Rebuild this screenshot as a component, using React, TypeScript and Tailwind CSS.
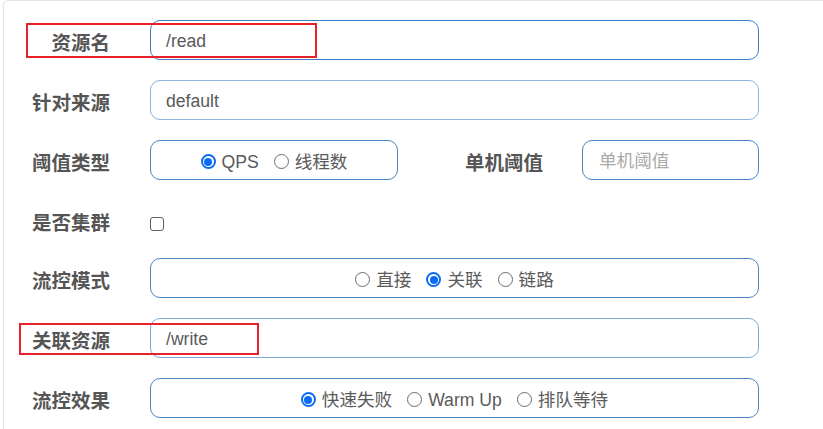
import React from 'react';

const font = "font-['Liberation_Sans','Noto_Sans_CJK_SC',sans-serif]";

const Label: React.FC<{ text: string; className?: string }> = ({ text, className = '' }) => (
  <div className={`h-10 flex items-center justify-end pt-[7px] text-[19.5px] font-bold text-[#555] ${className}`}>
    {text}
  </div>
);

const Radio: React.FC<{ checked?: boolean; label: string }> = ({ checked = false, label }) => (
  <label className="flex items-center gap-[6px]">
    {checked ? (
      <span className="w-[15px] h-[15px] rounded-full border-2 border-[#0a6cf5] flex items-center justify-center">
        <span className="w-[8px] h-[8px] rounded-full bg-[#0a6cf5]" />
      </span>
    ) : (
      <span className="w-[15px] h-[15px] rounded-full border border-[#6d6d6d] bg-white" />
    )}
    <span className="text-[17.6px] text-[#5a5a5a]">{label}</span>
  </label>
);

const RadioGroup: React.FC<{ options: string[]; selected: number; className?: string }> = ({
  options,
  selected,
  className = '',
}) => (
  <div
    className={`h-10 rounded-[10px] border border-[#4a84c4] flex items-center justify-center gap-[15px] pt-[4px] ${className}`}
  >
    {options.map((o, i) => (
      <Radio key={o} label={o} checked={i === selected} />
    ))}
  </div>
);

const TextInput: React.FC<{ value?: string; placeholder?: string; border?: string; className?: string }> = ({
  value,
  placeholder,
  border = 'border-[#4a84c4]',
  className = '',
}) => (
  <div
    className={`h-10 rounded-[10px] border ${border} flex items-center px-[15px] pt-[2px] text-[17.6px] ${className}`}
  >
    {value ? (
      <span className="text-[#5a5a5a]">{value}</span>
    ) : (
      <span className="text-[#aaa] pl-[1px]">{placeholder}</span>
    )}
  </div>
);

export default function App() {
  return (
    <div className={`relative w-[823px] h-[429px] overflow-hidden bg-white ${font}`}>
      <div className="ml-[3px] w-[900px] h-[520px] border border-[#e4e4e4] rounded-[5px] pt-[19px]">
        <div className="flex flex-col gap-5">
          <div className="flex">
            <Label text="资源名" className="w-[106px]" />
            <TextInput value="/read" border="border-[#3d7ec3]" className="ml-10 w-[609px]" />
          </div>

          <div className="flex">
            <Label text="针对来源" className="w-[106px]" />
            <TextInput value="default" border="border-[#8db3d9]" className="ml-10 w-[609px]" />
          </div>

          <div className="flex">
            <Label text="阈值类型" className="w-[106px]" />
            <RadioGroup options={['QPS', '线程数']} selected={0} className="ml-10 w-[248px]" />
            <Label text="单机阈值" className="w-[145px]" />
            <TextInput placeholder="单机阈值" className="ml-[39px] w-[177px]" />
          </div>

          <div className="flex items-center h-[38px] pt-[10px]">
            <div className="w-[106px] text-right text-[19.5px] font-bold text-[#555]">是否集群</div>
            <span className="ml-10 w-[14px] h-[14px] rounded-[3px] border-[1.5px] border-[#5f5f5f] bg-white" />
          </div>

          <div className="flex">
            <Label text="流控模式" className="w-[106px]" />
            <RadioGroup options={['直接', '关联', '链路']} selected={1} className="ml-10 w-[609px]" />
          </div>

          <div className="flex">
            <Label text="关联资源" className="w-[106px]" />
            <TextInput value="/write" border="border-[#7ea8d3]" className="ml-10 w-[609px]" />
          </div>

          <div className="flex">
            <Label text="流控效果" className="w-[106px]" />
            <RadioGroup options={['快速失败', 'Warm Up', '排队等待']} selected={0} className="ml-10 w-[609px]" />
          </div>
        </div>
      </div>

      <div className="absolute left-[26px] top-[23px] w-[291px] h-[35px] border-2 border-[#e8202a]" />
      <div className="absolute left-[19px] top-[323px] w-[240px] h-[32px] border-2 border-[#e8202a]" />
    </div>
  );
}
